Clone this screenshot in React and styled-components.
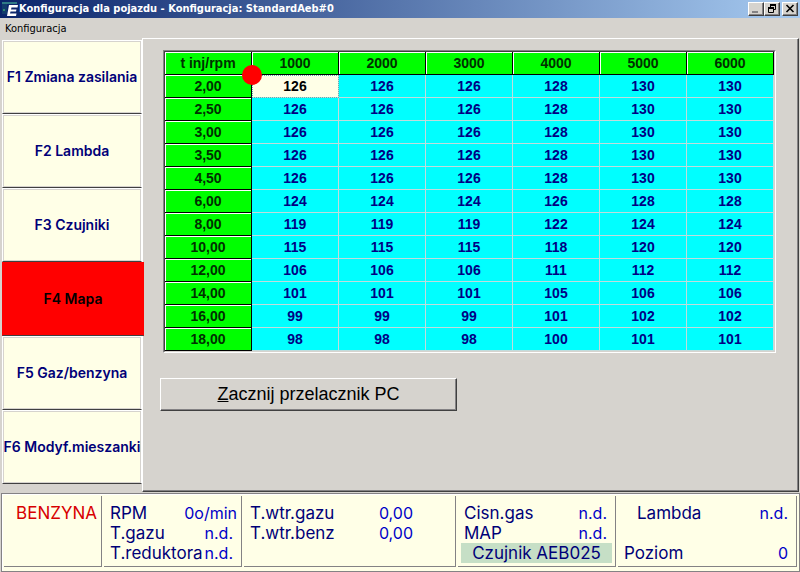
import React, { useState } from 'react';
import styled, { createGlobalStyle } from 'styled-components';

const GlobalStyle = createGlobalStyle`
  * {
    margin: 0;
    padding: 0;
    box-sizing: border-box;
  }

  body {
    background: #d6d3ce;
    font-family: "Liberation Sans", Arial, sans-serif;
    color: #000;
  }

  button {
    font-family: inherit;
    color: inherit;
    border: none;
    border-radius: 0;
    cursor: default;
  }
`;

const Window = styled.div`
  min-height: 100vh;
  display: flex;
  flex-direction: column;
`;

const TitleBar = styled.header`
  display: flex;
  align-items: center;
  height: 18px;
  padding: 0 2px;
  background: linear-gradient(90deg, #0a246a, #a6caf0);
  color: #fff;

  h1 {
    flex: 1;
    padding-left: 1px;
    font: bold 11px/18px "DejaVu Sans Condensed", "Noto Sans", sans-serif;
    white-space: nowrap;
  }
`;

const WindowButton = styled.button`
  width: 16px;
  height: 14px;
  margin-left: ${props => (props.$spaced ? '2px' : '0')};
  background: #d6d3ce;
  border: 1px solid;
  border-color: #fff #404040 #404040 #fff;
  box-shadow: inset -1px -1px #848284;

  svg {
    display: block;
  }
`;

const MenuBar = styled.nav`
  height: 20px;
  padding-left: 5px;

  button {
    background: none;
    font: 11px/20px "DejaVu Sans Condensed", "Noto Sans", sans-serif;
  }
`;

const Body = styled.main`
  flex: 1;
  display: flex;
  margin-right: 1px;
`;

const Sidebar = styled.div`
  width: 142px;
  flex-shrink: 0;
  padding: 2px 0 0 2px;
`;

const Tab = styled.button`
  display: block;
  position: relative;
  width: ${props => (props.$active ? '142px' : '140px')};
  height: 74px;
  padding-bottom: 2px;
  background: ${props => (props.$active ? '#ff0000' : '#ffffe7')};
  color: ${props => (props.$active ? '#000' : '#000078')};
  border: 1px solid;
  border-color: ${props => (props.$active ? '#ff0000 #ff0000 #404040' : '#fff #fff #404040')};
  box-shadow: ${props => (props.$active ? 'none' : 'inset 0 0 0 1px #d6d3ce')};
  font: 600 14px Inter, sans-serif;
  white-space: nowrap;
`;

const Panel = styled.section`
  flex: 1;
  min-width: 0;
  padding: 11px 22px 0 17px;
  border: 1px solid;
  border-color: #fff #404040 #404040 #fff;
  box-shadow: inset -1px -1px #848284;
`;

const MapFrame = styled.div`
  margin-left: 3px;
  border: 1px solid;
  border-color: #848284 #fff #fff #848284;
`;

const MapTable = styled.table`
  width: 100%;
  table-layout: fixed;
  border-collapse: separate;
  border-spacing: 0;
  border: 1px solid;
  border-color: #404040 #d6d3ce #d6d3ce #404040;
  font-size: 14px;
  font-weight: bold;
  text-align: center;
`;

const Fixed = styled.th`
  height: 23px;
  line-height: 20px;
  background: #00ff00;
  color: #003000;
  border-right: 1px solid #000;
  border-bottom: 1px solid #000;
  box-shadow: inset 1px 1px #fff;
`;

const Cell = styled.td`
  position: relative;
  height: 23px;
  line-height: 20px;
  background: ${props => (props.$selected ? '#ffffe7' : '#00ffff')};
  color: ${props => (props.$selected ? '#000' : '#000084')};
  border-right: 1px solid #c0dcdc;
  border-bottom: 1px solid #c0dcdc;
  outline: ${props => (props.$selected ? '1px dotted #60b0b0' : 'none')};
  outline-offset: -1px;
`;

const Marker = styled.span`
  position: absolute;
  top: -10px;
  left: -10px;
  z-index: 1;
  width: 20px;
  height: 20px;
  border-radius: 50%;
  background: #ff0000;
`;

const PushButton = styled.button`
  display: block;
  width: 297px;
  height: 33px;
  margin-top: 25px;
  background: #d6d3ce;
  border: 1px solid;
  border-color: #fff #404040 #404040 #fff;
  box-shadow: inset -1px -1px #848284;
  font-size: 18px;
`;

const StatusBar = styled.footer`
  display: grid;
  grid-template-columns: 98fr 138fr 212fr 158fr 179fr;
  gap: 2px;
  height: 79px;
  margin: 1px 0 0 1px;
  padding: 2px 2px 4px;
  background: #ffffe7;
  border: 1px solid #848284;
  box-shadow: inset 1px 1px #fff;
  font-family: Inter, sans-serif;
  font-size: 17px;
  line-height: 20px;
  color: #000078;
`;

const Group = styled.div`
  min-width: 0;
  padding: 7px ${props => props.$right || 4}px 0 6px;
  border-right: 1px solid #848284;
  border-bottom: 1px solid #848284;
  white-space: nowrap;
`;

const Reading = styled.div`
  display: flex;
  justify-content: space-between;
  height: 20px;
  padding-left: ${props => (props.$indent ? '13px' : '0')};
`;

const Value = styled.output`
  margin-right: ${props => (props.$wide ? '0' : '4px')};
  font-size: 16px;
  color: #0000c8;
`;

const Fuel = styled.strong`
  display: block;
  font-weight: normal;
  text-align: right;
  color: #d80000;
`;

const Sensor = styled.div`
  height: 20px;
  margin: 0 -1px 0 -3px;
  background: #c6dfc6;
  text-align: center;
`;

const TABS = [
  'F1 Zmiana zasilania',
  'F2 Lambda',
  'F3 Czujniki',
  'F4 Mapa',
  'F5 Gaz/benzyna',
  'F6 Modyf.mieszanki',
];

const RPM = [1000, 2000, 3000, 4000, 5000, 6000];

const ROWS = [
  ['2,00', 126, 126, 126, 128, 130, 130],
  ['2,50', 126, 126, 126, 128, 130, 130],
  ['3,00', 126, 126, 126, 128, 130, 130],
  ['3,50', 126, 126, 126, 128, 130, 130],
  ['4,50', 126, 126, 126, 128, 130, 130],
  ['6,00', 124, 124, 124, 126, 128, 128],
  ['8,00', 119, 119, 119, 122, 124, 124],
  ['10,00', 115, 115, 115, 118, 120, 120],
  ['12,00', 106, 106, 106, 111, 112, 112],
  ['14,00', 101, 101, 101, 105, 106, 106],
  ['16,00', 99, 99, 99, 101, 102, 102],
  ['18,00', 98, 98, 98, 100, 101, 101],
];

const AppIcon = () => (
  <svg width="16" height="16" viewBox="0 0 16 16" aria-hidden="true">
    <path d="M0 1h15v2H0z" fill="#2f7a86" />
    <path d="M0 3h5v10H0z" fill="#123c6c" />
    <path d="M1 8h2v2H1z" fill="#2f8a70" />
    <path d="M7 4h9l-.5 2.500H9.500L9 8.500h5.500l-.5 2H8.500l-.5 2h6.500l-.5 2.500H5z" fill="#fff" />
  </svg>
);

const App = () => {
  const [activeTab, setActiveTab] = useState(3);
  const [selected, setSelected] = useState('0-0');

  return (
    <>
      <GlobalStyle />
      <Window>
        <TitleBar>
          <AppIcon />
          <h1>Konfiguracja dla pojazdu - Konfiguracja: StandardAeb#0</h1>
          <WindowButton aria-label="Minimize">
            <svg width="14" height="12"><path d="M3 8h6v2H3z" fill="#848284" /></svg>
          </WindowButton>
          <WindowButton aria-label="Restore">
            <svg width="14" height="12" fill="none" stroke="#000">
              <path d="M5 1.500h6M5.500 1v3M10.500 1v5.500H8M5 2.500h6M3 4.500h6M3 5.500h6M3.500 4v5.500h5V4" />
            </svg>
          </WindowButton>
          <WindowButton $spaced aria-label="Close">
            <svg width="14" height="12" stroke="#000" strokeWidth="1.6"><path d="M3.500 2l7 7M10.500 2l-7 7" /></svg>
          </WindowButton>
        </TitleBar>

        <MenuBar>
          <button>Konfiguracja</button>
        </MenuBar>

        <Body>
          <Sidebar>
            {TABS.map((label, i) => (
              <Tab key={label} $active={i === activeTab} onClick={() => setActiveTab(i)}>
                {label}
              </Tab>
            ))}
          </Sidebar>

          <Panel>
            <MapFrame>
              <MapTable>
                <thead>
                  <tr>
                    <Fixed scope="col">t inj/rpm</Fixed>
                    {RPM.map(rpm => <Fixed key={rpm} scope="col">{rpm}</Fixed>)}
                  </tr>
                </thead>
                <tbody>
                  {ROWS.map(([time, ...values], r) => (
                    <tr key={time}>
                      <Fixed scope="row">{time}</Fixed>
                      {values.map((value, c) => {
                        const id = `${r}-${c}`;
                        return (
                          <Cell key={id} $selected={id === selected} onClick={() => setSelected(id)}>
                            {value}
                            {id === '0-0' && <Marker />}
                          </Cell>
                        );
                      })}
                    </tr>
                  ))}
                </tbody>
              </MapTable>
            </MapFrame>
            <PushButton><u>Z</u>acznij przelacznik PC</PushButton>
          </Panel>
        </Body>

        <StatusBar>
          <Group>
            <Fuel>BENZYNA</Fuel>
          </Group>
          <Group>
            <Reading>RPM<Value $wide>0o/min</Value></Reading>
            <Reading>T.gazu<Value>n.d.</Value></Reading>
            <Reading>T.reduktora<Value>n.d.</Value></Reading>
          </Group>
          <Group $right={38}>
            <Reading>T.wtr.gazu<Value>0,00</Value></Reading>
            <Reading>T.wtr.benz<Value>0,00</Value></Reading>
          </Group>
          <Group>
            <Reading>Cisn.gas<Value>n.d.</Value></Reading>
            <Reading>MAP<Value>n.d.</Value></Reading>
            <Sensor>Czujnik AEB025</Sensor>
          </Group>
          <Group>
            <Reading $indent>Lambda<Value>n.d.</Value></Reading>
            <Reading />
            <Reading>Poziom<Value>0</Value></Reading>
          </Group>
        </StatusBar>
      </Window>
    </>
  );
};

export default App;
